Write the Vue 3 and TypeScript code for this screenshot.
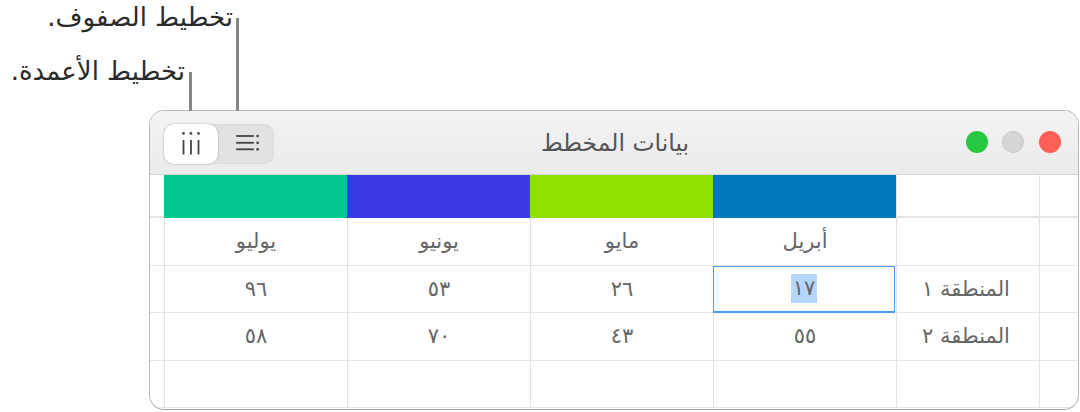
<script setup lang="ts">
interface Cell { text: string; selected?: boolean }
const swatches: string[] = ['', '', '#0377bc', '#8fe000', '#3c39e6', '#00c88f', '']
const rows: Cell[][] = [
  [{ text: '' }, { text: 'أبريل' }, { text: 'مايو' }, { text: 'يونيو' }, { text: 'يوليو' }],
  [{ text: 'المنطقة ١' }, { text: '١٧', selected: true }, { text: '٢٦' }, { text: '٥٣' }, { text: '٩٦' }],
  [{ text: 'المنطقة ٢' }, { text: '٥٥' }, { text: '٤٣' }, { text: '٧٠' }, { text: '٥٨' }],
  [{ text: '' }, { text: '' }, { text: '' }, { text: '' }, { text: '' }],
]
</script>

<template>
  <div class="page">
    <div class="callout callout-rows">
      <span class="callout-text">تخطيط الصفوف.</span>
      <span class="leader leader-rows"></span>
    </div>
    <div class="callout callout-cols">
      <span class="callout-text">تخطيط الأعمدة.</span>
      <span class="leader leader-cols"></span>
    </div>

    <section class="window" dir="rtl">
      <header class="titlebar">
        <div class="lights">
          <span class="light red"></span>
          <span class="light gray"></span>
          <span class="light green"></span>
        </div>
        <h1 class="title">بيانات المخطط</h1>
        <div class="segment" dir="ltr">
          <button class="seg seg-on" type="button" aria-label="تخطيط الأعمدة">
            <svg width="24" height="24" viewBox="0 0 24 24">
              <g fill="#444">
                <circle cx="4.5" cy="1.4" r="1.35" /><circle cx="12" cy="1.4" r="1.35" /><circle cx="19.5" cy="1.4" r="1.35" />
                <rect x="3.6" y="8" width="1.8" height="14.5" /><rect x="11.1" y="8" width="1.8" height="14.5" /><rect x="18.6" y="8" width="1.8" height="14.5" />
              </g>
            </svg>
          </button>
          <button class="seg" type="button" aria-label="تخطيط الصفوف">
            <svg width="26" height="20" viewBox="0 0 26 20">
              <g fill="#444">
                <rect x="3.2" y="1.1" width="17.6" height="1.8" /><rect x="3.2" y="7.9" width="17.6" height="1.8" /><rect x="3.2" y="14.4" width="17.6" height="1.8" />
                <circle cx="24.6" cy="2" r="1.35" /><circle cx="24.6" cy="8.8" r="1.35" /><circle cx="24.6" cy="15.3" r="1.35" />
              </g>
            </svg>
          </button>
        </div>
      </header>

      <div class="sheet">
        <div class="row row-swatch">
          <div v-for="(c, i) in swatches" :key="i" class="cell swatch" :class="{ filled: c, edge: i === 6 }" :style="c ? { background: c } : undefined"></div>
        </div>
        <div v-for="(row, r) in rows" :key="r" class="row">
          <div class="cell"></div>
          <div v-for="(cell, c) in row" :key="c" class="cell" :class="{ active: cell.selected, label: c === 0 }">
            <mark v-if="cell.selected" class="sel">{{ cell.text }}</mark>
            <template v-else>{{ cell.text }}</template>
          </div>
          <div class="cell edge"></div>
        </div>
      </div>
    </section>
  </div>
</template>

<style>
html, body { margin: 0; background: #fff; }
</style>

<style scoped>
.page {
  position: relative;
  width: 1080px;
  height: 412px;
  box-sizing: border-box;
  padding: 110px 1px 0 149px;
  font-family: "DejaVu Sans", "Noto Sans", sans-serif;
  overflow: hidden;
}
.callout { position: absolute; top: 0; left: 0; }
.callout-text {
  position: absolute;
  font-size: 26px;
  line-height: 32px;
  color: #2a2a2a;
  white-space: nowrap;
  direction: rtl;
}
.callout-rows .callout-text { right: -233px; top: 1px; }
.callout-cols .callout-text { right: -185px; top: 55px; }
.leader { position: absolute; width: 3px; background: #858585; }
.leader-rows { left: 236px; top: 18px; height: 105px; }
.leader-cols { left: 189px; top: 72px; height: 51px; }

.window {
  height: 300px;
  box-sizing: border-box;
  border: 1px solid #b9b9b9;
  border-bottom-color: #9f9f9f;
  border-radius: 15px;
  overflow: hidden;
  background: #fff;
  display: flex;
  flex-direction: column;
}
.titlebar {
  height: 64px;
  flex: none;
  box-sizing: border-box;
  border-bottom: 1px solid #d6d6d6;
  background: linear-gradient(#f3f3f3, #ebebeb);
  display: flex;
  align-items: center;
  justify-content: space-between;
  padding: 0 17px 0 13.5px;
  position: relative;
}
.lights { display: flex; gap: 14.6px; margin-bottom: 2px; }
.light { width: 22px; height: 22px; border-radius: 50%; box-sizing: border-box; }
.red { background: #ff5f57; }
.gray { background: #d5d5d5; border: 1px solid #c8c8c8; }
.green { background: #27c840; }
.title {
  margin: 0;
  font-size: 23.5px;
  font-weight: 400;
  color: #555;
  position: absolute;
  left: 465px;
  width: 0;
  display: flex;
  justify-content: center;
  white-space: nowrap;
}
.segment {
  display: flex;
  width: 110px;
  height: 40px;
  margin-top: 2px;
  border-radius: 10px;
  background: #e2e2e2;
  box-shadow: inset 0 0 0 1px #dcdcdc;
}
.seg {
  border: 0;
  padding: 0;
  margin: 0;
  background: transparent;
  flex: 1;
  display: flex;
  align-items: center;
  justify-content: center;
}
.seg-on {
  flex: none;
  width: 54px;
  background: #fff;
  border-radius: 10px;
  box-shadow: 0 0 2px rgba(0, 0, 0, 0.35);
}
.sheet { flex: 1; display: flex; flex-direction: column; }
.row {
  display: grid;
  grid-template-columns: 39px 143px 183px 183px 183px 183px 14px;
  height: 47.5px;
  box-sizing: border-box;
  flex: none;
}
.row-swatch { height: 43px; }
.cell {
  box-sizing: border-box;
  border-bottom: 1px solid #e6e6e6;
  border-left: 1px solid #e2e2e2;
  display: flex;
  align-items: center;
  justify-content: center;
  font-size: 21px;
  color: #666;
}
.label { padding-right: 4px; }
.swatch { border-bottom: 2px solid #e4e4e4; }
.swatch.filled { border: 0; }
.edge { border-left: 0; }
.active { border: 1px solid #4a9bf5; border-bottom-width: 2px; margin: 0 1px 0 0; }
.sel { display: inline-block; height: 29px; line-height: 29px; padding: 0 2px; background: #b5d7ff; color: #666; }
</style>
